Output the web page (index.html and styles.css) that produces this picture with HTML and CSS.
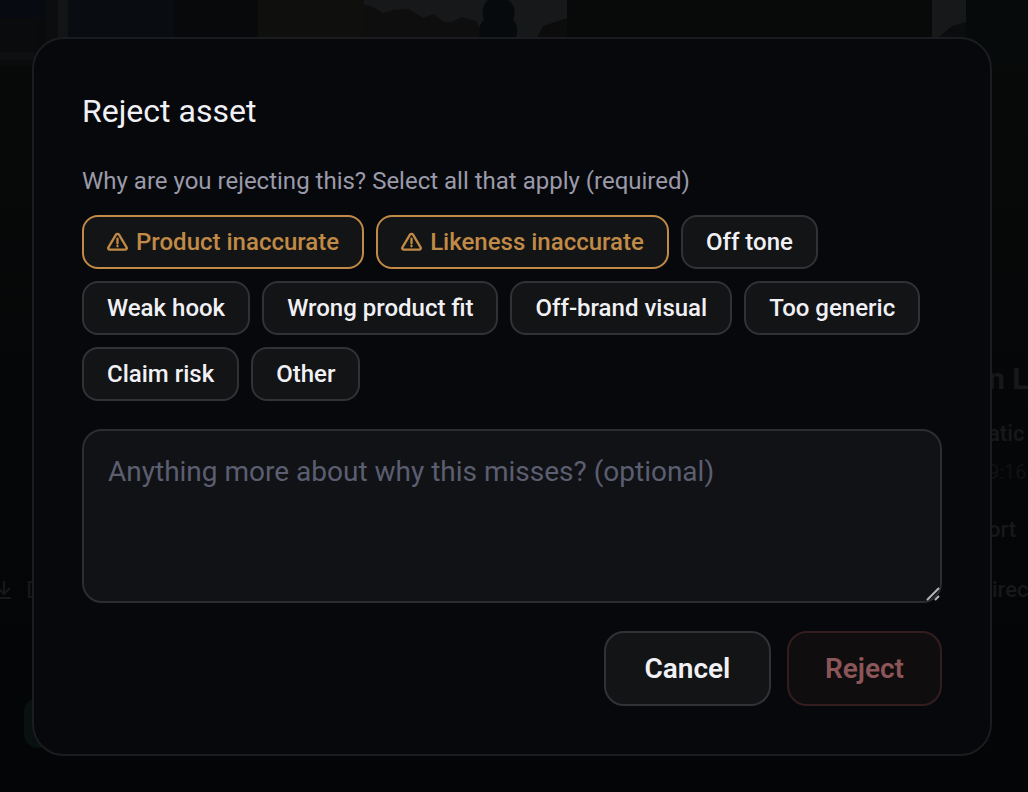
FILE: index.html
```html
<!DOCTYPE html>
<html lang="en">
<head>
<meta charset="utf-8">
<meta name="viewport" content="width=device-width, initial-scale=1">
<title>Reject asset</title>
<link rel="stylesheet" href="styles.css">
</head>
<body>
<div class="page">
  <svg class="hero" viewBox="0 0 1028 66" preserveAspectRatio="none" aria-hidden="true">
    <rect width="1028" height="66" fill="#090a0b"/>
    <rect width="46" height="18" fill="#080a12"/>
    <rect y="18" width="38" height="48" fill="#0a0b0c"/>
    <rect y="52" width="34" height="8" fill="#0e0f10"/>
    <rect x="46" width="12" height="66" fill="#0c0d0e"/>
    <rect x="58" width="10" height="66" fill="#131415"/>
    <rect x="68" width="106" height="38" fill="#090c10"/>
    <rect x="174" width="84" height="38" fill="#08090a"/>
    <rect x="258" width="106" height="38" fill="#0f0f0e"/>
    <rect x="364" width="203" height="38" fill="#16181a"/>
    <path d="M364 4l9 3 10 6 10-3 16-1 14 9 11-4 10 8h8l10-5 14 4 4 8v9H364z" fill="#0f0e0f"/>
    <path d="M480 38c-2-10 0-14 4-18-3-8-1-16 4-20h20c7 5 8 12 5 20 5 5 5 10 3 18z" fill="#070a0d"/>
    <path d="M567 18l-24 8-6 12h30z" fill="#0c0c0d"/>
    <rect x="567" width="365" height="38" fill="#080a0a"/>
    <rect x="932" width="34" height="38" fill="#16181a"/>
    <path d="M966 22l-14 4-14 12h28z" fill="#0b0c0d"/>
    <rect x="966" width="62" height="66" fill="#070a0b"/>
  </svg>
  <div class="columns">
    <div class="rail">
      <div class="download">
        <svg width="22" height="22" viewBox="0 0 22 22" aria-hidden="true"><path d="M4 2v12M-2 9l6 6 6-6M-3 19h14"/></svg>
        <span>D</span>
      </div>
      <div class="approve"></div>
    </div>
    <div class="details">
      <p class="name">n L</p>
      <p class="kind">atic</p>
      <p class="ratio">9:16</p>
      <p class="action">ort</p>
      <p class="action indent">irec</p>
    </div>
  </div>
</div>

<div class="backdrop">
  <form class="dialog" role="dialog" aria-modal="true" aria-labelledby="title">
    <h1 class="title" id="title">Reject asset</h1>
    <p class="question" id="question">Why are you rejecting this? Select all that apply (required)</p>
    <div class="chips" role="group" aria-labelledby="question">
      <button type="button" class="chip warn"><svg class="icon" viewBox="0 0 22 20" aria-hidden="true"><path d="M9.400 2.300 1.500 15.600C.8 16.900 1.600 18 3 18h16c1.400 0 2.200-1.100 1.500-2.400L12.600 2.300c-.7-1.200-2.500-1.200-3.200 0z"/><path d="M11 6.500v5M11 14v.5"/></svg>Product inaccurate</button>
      <button type="button" class="chip warn"><svg class="icon" viewBox="0 0 22 20" aria-hidden="true"><path d="M9.400 2.300 1.500 15.600C.8 16.900 1.600 18 3 18h16c1.400 0 2.200-1.100 1.500-2.400L12.600 2.300c-.7-1.200-2.500-1.200-3.200 0z"/><path d="M11 6.500v5M11 14v.5"/></svg>Likeness inaccurate</button>
      <button type="button" class="chip">Off tone</button>
      <button type="button" class="chip">Weak hook</button>
      <button type="button" class="chip">Wrong product fit</button>
      <button type="button" class="chip">Off-brand visual</button>
      <button type="button" class="chip">Too generic</button>
      <button type="button" class="chip">Claim risk</button>
      <button type="button" class="chip">Other</button>
    </div>
    <div class="field">
      <textarea class="note" aria-label="Anything more about why this misses?" placeholder="Anything more about why this misses? (optional)"></textarea>
      <svg class="grip" viewBox="0 0 16 16" aria-hidden="true"><path d="M2 14 14 2M10 14l4-4"/></svg>
    </div>
    <div class="actions">
      <button type="button" class="button cancel">Cancel</button>
      <button type="submit" class="button danger" disabled>Reject</button>
    </div>
  </form>
</div>
</body>
</html>
```

FILE: styles.css
```css
* {
  box-sizing: border-box;
}

body {
  margin: 0;
  background: #050607;
  color: #f1f1f5;
  font-family: Roboto, "Liberation Sans", sans-serif;
}

.page {
  min-height: 100vh;
  overflow: hidden;
  color: #17181a;
  background: linear-gradient(180deg, #080909, #040506 80%);
}

.hero {
  display: block;
  width: 100%;
  height: 66px;
}

.columns {
  display: flex;
  justify-content: space-between;
}

.rail {
  display: flex;
  flex-direction: column;
  gap: 96px;
  width: 52px;
  padding-top: 512px;
}

.download {
  display: flex;
  gap: 4px;
  align-items: center;
  height: 24px;
  font-size: 24px;
}

.download svg {
  flex: none;
  fill: none;
  stroke: #17181a;
  stroke-width: 2;
}

.approve {
  align-self: flex-end;
  width: 28px;
  height: 50px;
  border-radius: 16px;
  background: #08110f;
}

.details {
  width: 40px;
  padding-top: 292px;
  white-space: nowrap;
  font-size: 22px;
  line-height: 32px;
}

.details p {
  margin: 0;
}

.details .name {
  font-size: 30px;
  font-weight: 700;
  line-height: 42px;
  margin-bottom: 18px;
}

.details .kind {
  font-weight: 600;
  margin-bottom: 6px;
}

.details .ratio {
  color: #111214;
  font-size: 20px;
  margin-bottom: 26px;
}

.details .action {
  font-weight: 500;
  margin-bottom: 28px;
}

.details .indent {
  padding-left: 4px;
}

.backdrop {
  position: fixed;
  inset: 0;
  display: grid;
  align-items: center;
  padding: 24px 36px 24px 32px;
}

.dialog {
  display: flex;
  flex-direction: column;
  padding: 48px;
  border: 2px solid #1b1c1f;
  border-radius: 32px;
  background: #07080c;
}

.title {
  margin: 0 0 28px;
  font-size: 32px;
  font-weight: 400;
  line-height: 48px;
}

.question {
  margin: 0 0 16px;
  color: #9a9aa9;
  font-size: 24px;
  line-height: 36px;
}

.chips {
  display: flex;
  flex-wrap: wrap;
  gap: 12px;
  margin-bottom: 28px;
}

.chip,
.button {
  border: 2px solid #313236;
  background: #131416;
  color: #f1f1f5;
  font-family: inherit;
  font-weight: 500;
}

.chip {
  display: flex;
  gap: 8px;
  align-items: center;
  justify-content: center;
  padding: 8px 23px;
  border-radius: 16px;
  font-size: 24px;
  line-height: 34px;
}

.warn {
  border-color: #c18a46;
  color: #c18a46;
}

.icon {
  width: 21px;
  height: 20px;
  fill: none;
  stroke: currentColor;
  stroke-width: 2.4;
  stroke-linecap: round;
}

.field {
  position: relative;
  margin-bottom: 28px;
}

.note {
  display: block;
  width: 100%;
  height: 174px;
  padding: 20px 24px;
  border: 2px solid #2c2d31;
  border-radius: 20px;
  background: #111215;
  color: #f1f1f5;
  font-family: inherit;
  font-size: 28px;
  line-height: 42px;
  resize: none;
}

.note::placeholder {
  color: #5b5e70;
}

.grip {
  position: absolute;
  right: 1px;
  bottom: 1px;
  width: 16px;
  height: 16px;
  fill: none;
  stroke: #b4b4b6;
  stroke-width: 2;
}

.actions {
  display: flex;
  gap: 16px;
  justify-content: flex-end;
}

.button {
  padding: 14px 36px;
  border-radius: 20px;
  font-size: 28px;
  font-weight: 600;
  line-height: 43px;
}

.cancel {
  min-width: 167px;
}

.danger {
  border-color: #341d1f;
  background: #100d0f;
  color: #8c5659;
}
```
